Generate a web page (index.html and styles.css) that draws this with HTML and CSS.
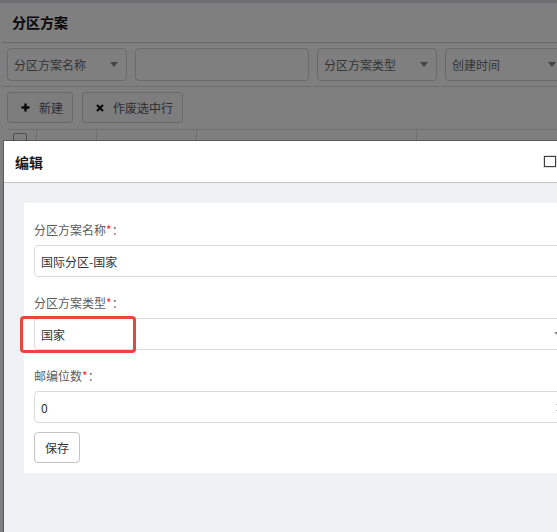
FILE: index.html
```html
<!DOCTYPE html>
<html lang="zh">
<head>
<meta charset="utf-8">
<title>分区方案</title>
<link rel="stylesheet" href="styles.css">
</head>
<body>
<div class="page">
  <div class="topbar"></div>
  <div class="title-bar">分区方案</div>
  <div class="filters">
    <div class="fsel"><span>分区方案名称</span><i class="caret"></i></div>
    <div class="finput"></div>
    <div class="fsel"><span>分区方案类型</span><i class="caret"></i></div>
    <div class="fsel"><span>创建时间</span><i class="caret"></i></div>
  </div>
  <div class="toolbar">
    <div class="btn">
      <svg class="ico" viewBox="0 0 9 9" width="9" height="9"><path d="M4.5 0.5v8M0.5 4.5h8" stroke="#111" stroke-width="2.4"/></svg>
      <span>新建</span>
    </div>
    <div class="btn">
      <svg class="ico" viewBox="0 0 8 8" width="8" height="8"><path d="M1 1L7 7M7 1L1 7" stroke="#111" stroke-width="2.2"/></svg>
      <span>作废选中行</span>
    </div>
  </div>
  <div class="thead">
    <div class="th c0"><span class="cb"></span></div>
    <div class="th c1"></div>
    <div class="th c2"></div>
    <div class="th c3"></div>
    <div class="th c4"></div>
  </div>
</div>

<div class="mask"></div>

<div class="modal">
  <div class="modal-head">
    <span class="modal-title">编辑</span>
    <span class="head-icons">
      <span class="max-ico"></span>
    </span>
  </div>
  <div class="modal-body">
    <div class="panel">
      <div class="group">
        <div class="label">分区方案名称<em>*</em>：</div>
        <div class="field">国际分区-国家</div>
      </div>
      <div class="group">
        <div class="label">分区方案类型<em>*</em>：</div>
        <div class="field select-field">
          <span>国家</span><i class="mcaret"></i>
          <span class="mark"></span>
        </div>
      </div>
      <div class="group group-last">
        <div class="label">邮编位数<em>*</em>：</div>
        <div class="field">
          <span>0</span>
          <span class="spin"><i class="up"></i><i class="down"></i></span>
        </div>
      </div>
      <div class="save">保存</div>
    </div>
  </div>
</div>
</body>
</html>
```

FILE: styles.css
```css
html, body {
  margin: 0;
  padding: 0;
}
body {
  width: 557px;
  height: 532px;
  overflow: hidden;
  background: #fff;
  font-family: "Noto Sans CJK SC", "Noto Sans", sans-serif;
  font-size: 12px;
  color: #333;
  position: relative;
}

/* ---------- background page ---------- */
.page {
  background: #fff;
  height: 532px;
}
.topbar {
  height: 3px;
  background: #dcdce6;
}
.title-bar {
  height: 39px;
  line-height: 39px;
  font-size: 14px;
  font-weight: bold;
  color: #111;
  border-bottom: 1px solid #d0d0d0;
  margin-left: 2px;
  padding-left: 10px;
}
.filters {
  display: flex;
  gap: 8px;
  padding: 5px 0 5px 5px;
  border-bottom: 1px solid #dadada;
  margin-left: 2px;
}
.fsel, .finput {
  flex: none;
  box-sizing: border-box;
  height: 33px;
  border: 1px solid #d6d6d6;
  border-radius: 4px;
  background: #fff;
}
.fsel {
  width: 120px;
  display: flex;
  align-items: center;
  justify-content: space-between;
  padding: 0 8px 0 6px;
  color: #6b6b6b;
  font-size: 12px;
}
.finput {
  width: 174px;
}
.caret {
  width: 0;
  height: 0;
  border-left: 4px solid transparent;
  border-right: 4px solid transparent;
  border-top: 5px solid #8a8a8a;
}
.toolbar {
  display: flex;
  gap: 9px;
  padding: 5px 0 6px 7px;
}
.btn {
  box-sizing: border-box;
  height: 31px;
  display: flex;
  align-items: center;
  padding: 0 9px 0 13px;
  border: 1px solid #d2d2d2;
  border-radius: 3px;
  background: #fbfbfb;
  color: #5a5a66;
  font-size: 12px;
}
.btn .ico {
  margin-right: 9px;
}
.thead {
  display: flex;
  height: 40px;
  border-top: 1px solid #dedede;
  margin-left: 7px;
}
.th {
  box-sizing: border-box;
  border-right: 1px solid #e2e2e2;
}
.c0 { width: 30px; }
.c1 { width: 60px; }
.c2 { width: 100px; }
.c3 { width: 220px; }
.c4 { flex: 1; border-right: none; }
.cb {
  display: block;
  width: 14px;
  height: 14px;
  box-sizing: border-box;
  border: 1px solid #9a9a9a;
  border-radius: 2px;
  margin: 3px 0 0 6px;
  background: #fff;
}

/* ---------- mask ---------- */
.mask {
  position: absolute;
  inset: 0;
  background: rgba(0, 0, 0, 0.5);
}

/* ---------- modal ---------- */
.modal {
  position: absolute;
  left: 4px;
  top: 141px;
  width: 599px;
  height: 420px;
  background: #f0f1f5;
  box-shadow: 0 0 0 1px rgba(0, 0, 0, 0.28);
}
.modal-head {
  height: 41px;
  background: #fff;
  border-bottom: 1px solid #c6c6c6;
  display: flex;
  align-items: center;
  padding-left: 11px;
}
.modal-title {
  font-size: 14px;
  font-weight: bold;
  color: #1a1a1a;
}
.head-icons {
  margin-left: auto;
  display: flex;
  align-items: center;
  margin-right: 47px;
}
.max-ico {
  display: block;
  width: 12px;
  height: 11px;
  box-sizing: border-box;
  border: 1.5px solid #3c3c3c;
  background: #fff;
  box-shadow: 0 0 0 0.5px #bbb;
}
.modal-body {
  padding: 20px 20px 0 20px;
}
.panel {
  background: #fff;
  padding: 18px 10px 10px 10px;
  width: 557px;
  box-sizing: border-box;
}
.group {
  margin-bottom: 17px;
}
.group-last {
  margin-bottom: 9px;
}
.label {
  font-size: 12px;
  line-height: 18px;
  color: #5c5c5c;
  margin-bottom: 6px;
}
.label em {
  font-style: normal;
  color: #f0302a;
}
.field {
  position: relative;
  box-sizing: border-box;
  height: 32px;
  border: 1px solid #dadada;
  border-radius: 4px;
  display: flex;
  align-items: center;
  justify-content: space-between;
  padding: 0 8px 0 6px;
  font-size: 12px;
  color: #333;
}
.mcaret {
  width: 0;
  height: 0;
  border-left: 4px solid transparent;
  border-right: 4px solid transparent;
  border-top: 4px solid #888;
}
.mark {
  position: absolute;
  left: -15px;
  top: -3px;
  width: 116px;
  height: 37px;
  box-sizing: border-box;
  border: 3px solid #e8473b;
  border-radius: 4px;
}
.spin {
  display: flex;
  flex-direction: column;
  gap: 5px;
}
.spin i {
  width: 0;
  height: 0;
  border-left: 3px solid transparent;
  border-right: 3px solid transparent;
}
.spin .up { border-bottom: 3px solid #777; }
.spin .down { border-top: 3px solid #777; }
.save {
  display: flex;
  align-items: center;
  justify-content: center;
  box-sizing: border-box;
  height: 31px;
  width: 46px;
  border: 1px solid #c4c4c4;
  border-radius: 4px;
  font-size: 12px;
  color: #333;
  background: #fff;
}
```
